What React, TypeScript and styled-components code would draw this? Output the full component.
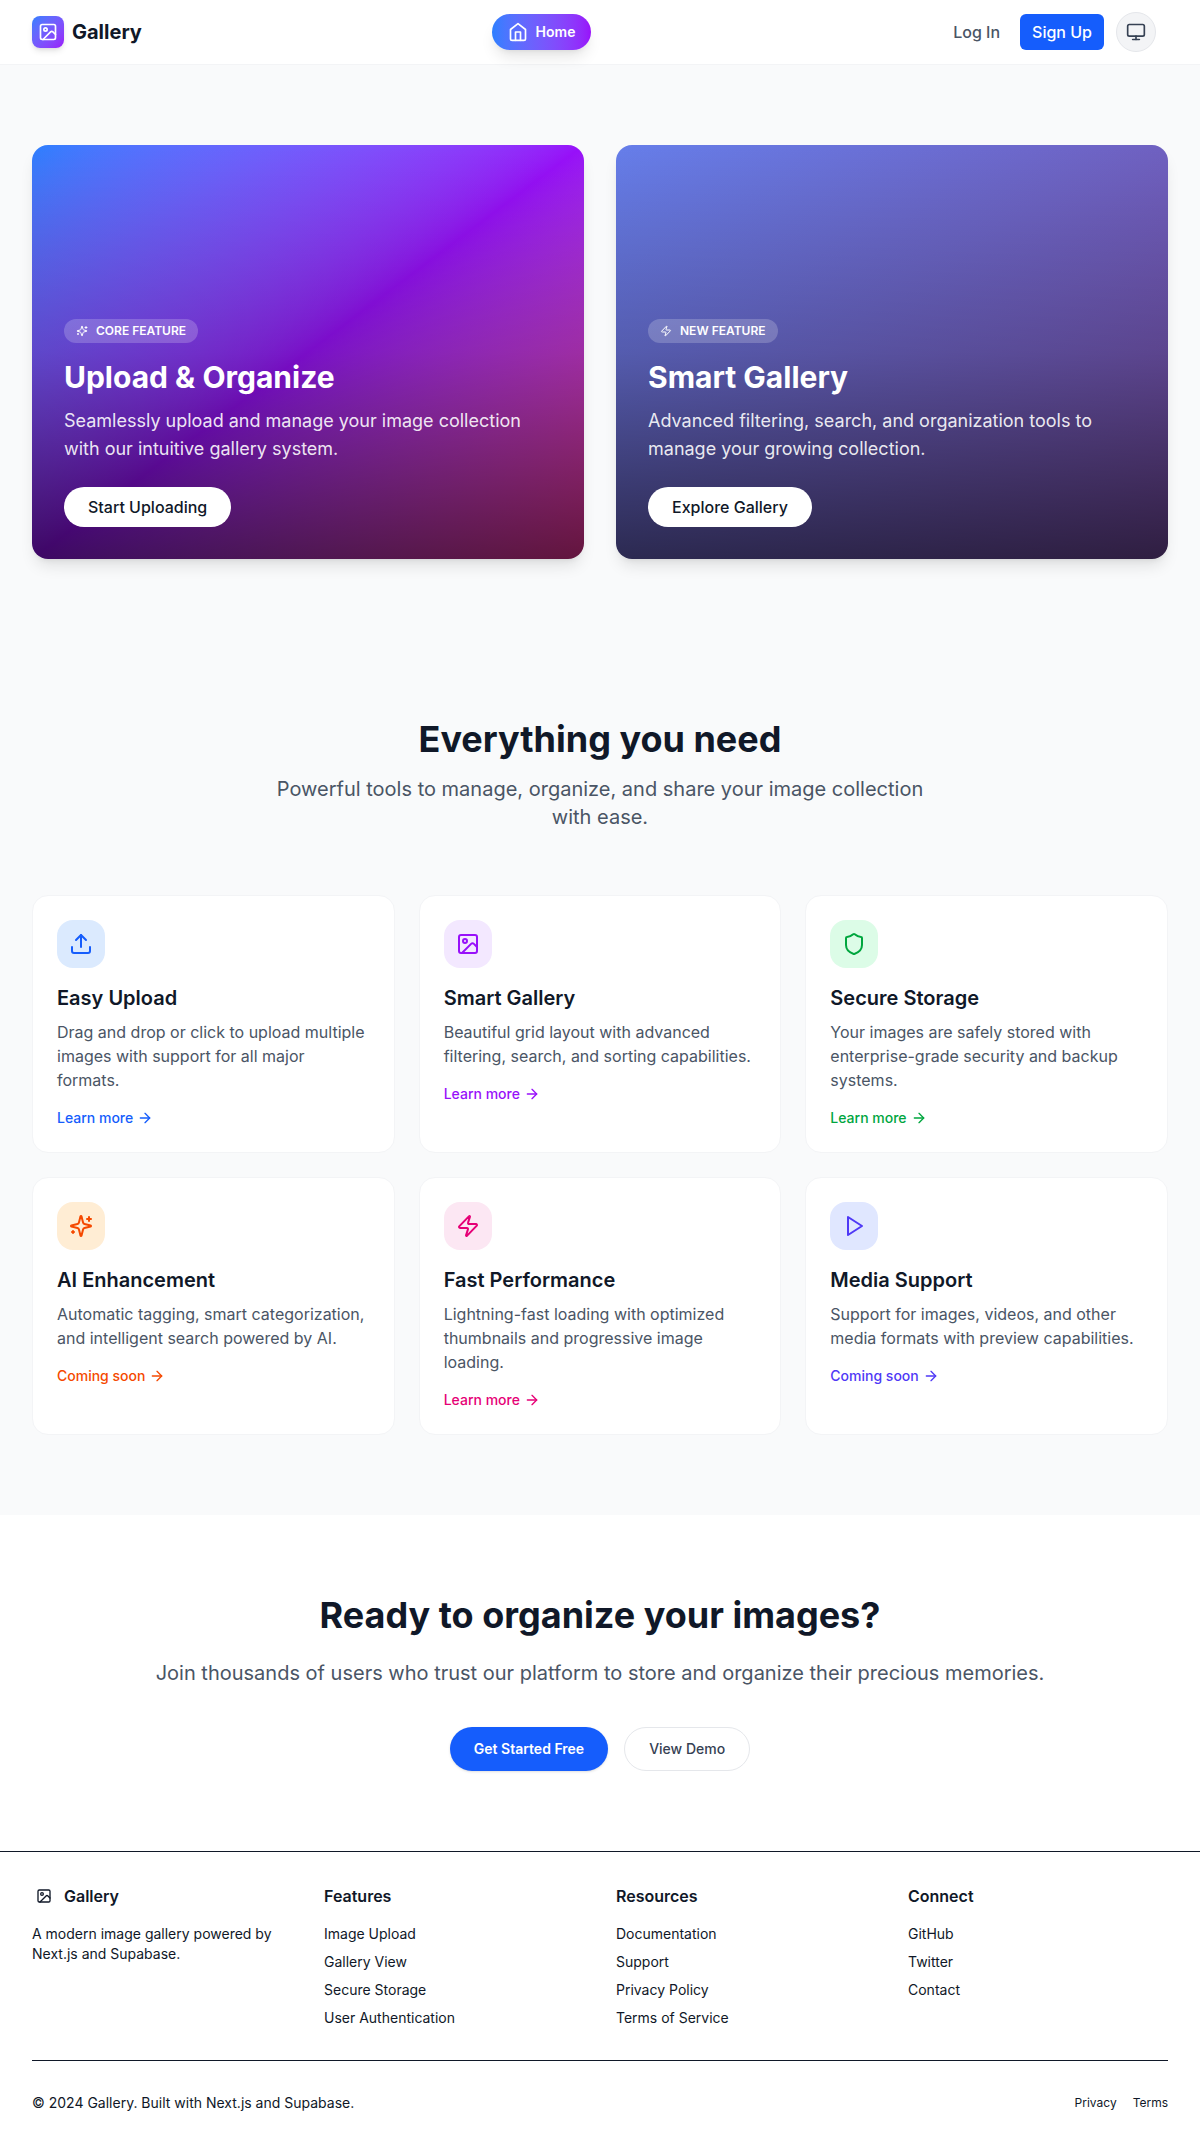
import React from "react";
import styled, { createGlobalStyle } from "styled-components";
import {
  ArrowRight,
  Image as ImageIcon,
  Monitor,
  Shield,
  Zap,
} from "lucide-react";

const GlobalStyle = createGlobalStyle`
  *, *::before, *::after { box-sizing: border-box; }
  body {
    margin: 0;
    background: #f9fafb;
    color: #101828;
    font-family: Inter, "Liberation Sans", sans-serif;
    font-size: 16px;
    line-height: 24px;
    -webkit-font-smoothing: antialiased;
  }
  h1, h2, h3, h4, p, ul { margin: 0; padding: 0; }
  ul { list-style: none; }
  a { color: inherit; text-decoration: none; }
  button { font: inherit; border: 0; margin: 0; cursor: pointer; }
  svg { display: block; flex-shrink: 0; }
`;

/* Icons */

type IconProps = { size: number };

const StrokeSvg = ({ size, children }: IconProps & { children: React.ReactNode }) => (
  <svg
    width={size}
    height={size}
    viewBox="0 0 24 24"
    fill="none"
    stroke="currentColor"
    strokeWidth={2}
    strokeLinecap="round"
    strokeLinejoin="round"
  >
    {children}
  </svg>
);

const HomeIcon = ({ size }: IconProps) => (
  <StrokeSvg size={size}>
    <path d="m3 9 9-7 9 7v11a2 2 0 0 1-2 2H5a2 2 0 0 1-2-2z" />
    <polyline points="9 22 9 12 15 12 15 22" />
  </StrokeSvg>
);

const UploadIcon = ({ size }: IconProps) => (
  <StrokeSvg size={size}>
    <path d="M21 15v4a2 2 0 0 1-2 2H5a2 2 0 0 1-2-2v-4" />
    <polyline points="17 8 12 3 7 8" />
    <line x1="12" x2="12" y1="3" y2="15" />
  </StrokeSvg>
);

const SparklesIcon = ({ size }: IconProps) => (
  <StrokeSvg size={size}>
    <path d="M9.937 15.5A2 2 0 0 0 8.5 14.063l-6.135-1.582a.5.5 0 0 1 0-.962L8.5 9.936A2 2 0 0 0 9.937 8.5l1.582-6.135a.5.5 0 0 1 .963 0L14.063 8.5A2 2 0 0 0 15.5 9.937l6.135 1.581a.5.5 0 0 1 0 .964L15.5 14.063a2 2 0 0 0-1.437 1.437l-1.582 6.135a.5.5 0 0 1-.963 0z" />
    <path d="M20 3v4" />
    <path d="M22 5h-4" />
    <path d="M4 17v2" />
    <path d="M5 18H3" />
  </StrokeSvg>
);

const PlayIcon = ({ size }: IconProps) => (
  <StrokeSvg size={size}>
    <polygon points="6 3 20 12 6 21 6 3" />
  </StrokeSvg>
);

/* Header */

const Header = styled.header`
  display: flex;
  align-items: center;
  justify-content: space-between;
  height: 65px;
  padding: 0 32px;
  background: #fff;
  border-bottom: 1px solid #f3f4f6;
`;

const Brand = styled.a`
  display: flex;
  align-items: center;
  gap: 8px;
  font-size: 20px;
  line-height: 28px;
  font-weight: 700;
`;

const BrandMark = styled.span`
  display: flex;
  align-items: center;
  justify-content: center;
  width: 32px;
  height: 32px;
  border-radius: 8px;
  color: #fff;
  background: linear-gradient(to bottom right in oklab, #2b7fff, #9810fa);
  box-shadow: 0 4px 6px -1px rgba(0, 0, 0, 0.1), 0 2px 4px -2px rgba(0, 0, 0, 0.1);
`;

const NavPill = styled.a`
  display: flex;
  align-items: center;
  gap: 8px;
  height: 36px;
  padding: 0 16px;
  border-radius: 18px;
  color: #fff;
  font-size: 14px;
  line-height: 20px;
  font-weight: 600;
  background: linear-gradient(to right in oklab, #2b7fff, #9810fa);
  box-shadow: 0 10px 15px -3px rgba(0, 0, 0, 0.1), 0 4px 6px -4px rgba(0, 0, 0, 0.1);
`;

const Actions = styled.div`
  display: flex;
  align-items: center;
  margin-right: 12px;
`;

const LogInLink = styled.a`
  padding: 6px 12px;
  margin-right: 8px;
  font-weight: 500;
  color: #4a5565;
`;

const SignUpButton = styled.button`
  height: 36px;
  padding: 0 12px;
  margin-right: 12px;
  border-radius: 6px;
  background: #155dfc;
  color: #fff;
  font-weight: 500;
`;

const ThemeButton = styled.button`
  display: flex;
  align-items: center;
  justify-content: center;
  width: 40px;
  height: 40px;
  padding: 0;
  border: 1px solid #e5e7eb;
  border-radius: 50%;
  background: #f3f4f6;
  color: #364153;
`;

/* Hero */

const Hero = styled.section`
  display: grid;
  grid-template-columns: 1fr 1fr;
  gap: 32px;
  padding: 80px 32px;
`;

const HeroCard = styled.article<{ $fill: string }>`
  display: flex;
  flex-direction: column;
  align-items: flex-start;
  justify-content: flex-end;
  aspect-ratio: 4 / 3;
  padding: 32px;
  border-radius: 16px;
  color: #fff;
  background: linear-gradient(
      to top in oklab,
      rgba(0, 0, 0, 0.6),
      rgba(0, 0, 0, 0.2),
      rgba(0, 0, 0, 0)
    ),
    ${(p) => p.$fill};
  box-shadow: 0 10px 15px -3px rgba(0, 0, 0, 0.1), 0 4px 6px -4px rgba(0, 0, 0, 0.1);
`;

const Badge = styled.span`
  display: flex;
  align-items: center;
  gap: 8px;
  height: 24px;
  padding: 0 12px;
  border-radius: 12px;
  background: rgba(255, 255, 255, 0.2);
  font-size: 12px;
  line-height: 16px;
  font-weight: 600;
  text-transform: uppercase;
`;

const HeroTitle = styled.h2`
  margin-top: 16px;
  font-size: 30px;
  line-height: 36px;
  font-weight: 700;
`;

const HeroText = styled.p`
  margin-top: 12px;
  font-size: 18px;
  line-height: 28px;
  color: rgba(255, 255, 255, 0.9);
`;

const HeroButton = styled.button`
  height: 40px;
  margin-top: 24px;
  padding: 0 24px;
  border-radius: 20px;
  background: #fff;
  color: #101828;
  font-weight: 500;
`;

/* Features */

const Features = styled.section`
  padding: 80px 32px;
`;

const SectionTitle = styled.h2`
  font-size: 36px;
  line-height: 40px;
  font-weight: 700;
  text-align: center;
`;

const SectionText = styled.p<{ $top: number; $max?: number }>`
  max-width: ${(p) => (p.$max ? `${p.$max}px` : "none")};
  margin: ${(p) => p.$top}px auto 0;
  font-size: 20px;
  line-height: 28px;
  text-align: center;
  color: #4a5565;
`;

const FeatureGrid = styled.div`
  display: grid;
  grid-template-columns: repeat(3, 1fr);
  gap: 24px;
  margin-top: 64px;
`;

const FeatureCard = styled.article`
  padding: 24px;
  border: 1px solid #f3f4f6;
  border-radius: 16px;
  background: #fff;
`;

const FeatureIcon = styled.span<{ $bg: string; $fg: string }>`
  display: flex;
  align-items: center;
  justify-content: center;
  width: 48px;
  height: 48px;
  border-radius: 16px;
  background: ${(p) => p.$bg};
  color: ${(p) => p.$fg};
`;

const FeatureTitle = styled.h3`
  margin-top: 16px;
  font-size: 20px;
  line-height: 28px;
  font-weight: 600;
`;

const FeatureText = styled.p`
  margin-top: 8px;
  color: #4a5565;
`;

const FeatureLink = styled.a<{ $fg: string }>`
  display: flex;
  align-items: center;
  gap: 4px;
  margin-top: 16px;
  font-size: 14px;
  line-height: 20px;
  font-weight: 500;
  color: ${(p) => p.$fg};
`;

/* Call to action */

const Cta = styled.section`
  padding: 80px 32px;
  background: #fff;
`;

const CtaButtons = styled.div`
  display: flex;
  justify-content: center;
  gap: 16px;
  margin-top: 40px;
`;

const CtaButton = styled.button<{ $primary?: boolean }>`
  height: 44px;
  padding: 0 24px;
  border: ${(p) => (p.$primary ? "0" : "1px solid #e5e7eb")};
  border-radius: 22px;
  background: ${(p) => (p.$primary ? "#155dfc" : "#fff")};
  color: ${(p) => (p.$primary ? "#fff" : "#364153")};
  font-size: 14px;
  line-height: 20px;
  font-weight: ${(p) => (p.$primary ? 600 : 500)};
  box-shadow: ${(p) =>
    p.$primary ? "0 1px 3px rgba(0,0,0,0.1), 0 1px 2px -1px rgba(0,0,0,0.1)" : "none"};
`;

/* Footer */

const Footer = styled.footer`
  padding: 32px;
  border-top: 1px solid #101828;
  background: #fff;
  font-size: 14px;
  line-height: 20px;
`;

const FooterGrid = styled.div`
  display: grid;
  grid-template-columns: repeat(4, 1fr);
  gap: 32px;
`;

const FooterHeading = styled.h4`
  display: flex;
  align-items: center;
  gap: 8px;
  margin-bottom: 16px;
  font-size: 16px;
  line-height: 24px;
  font-weight: 600;
`;

const FooterMark = styled.span`
  display: flex;
  align-items: center;
  justify-content: center;
  width: 24px;
  height: 24px;
`;

const FooterList = styled.ul`
  display: flex;
  flex-direction: column;
  gap: 8px;
`;

const FooterBottom = styled.div`
  display: flex;
  align-items: center;
  justify-content: space-between;
  margin-top: 32px;
  padding-top: 32px;
  border-top: 1px solid #101828;
`;

const LegalLinks = styled.nav`
  display: flex;
  gap: 16px;
  font-size: 12px;
  line-height: 16px;
`;

const heroes = [
  {
    fill: "linear-gradient(to bottom right in oklab, #2b7fff, #9810fa, #f6339a)",
    icon: <SparklesIcon size={12} />,
    badge: "Core Feature",
    title: "Upload & Organize",
    text: "Seamlessly upload and manage your image collection with our intuitive gallery system.",
    action: "Start Uploading",
  },
  {
    fill: "linear-gradient(135deg, #667eea 0%, #764ba2 100%)",
    icon: <Zap size={12} />,
    badge: "New Feature",
    title: "Smart Gallery",
    text: "Advanced filtering, search, and organization tools to manage your growing collection.",
    action: "Explore Gallery",
  },
];

const features = [
  {
    icon: <UploadIcon size={24} />,
    bg: "#dbeafe",
    fg: "#155dfc",
    title: "Easy Upload",
    text: "Drag and drop or click to upload multiple images with support for all major formats.",
    link: "Learn more",
  },
  {
    icon: <ImageIcon size={24} />,
    bg: "#f3e8ff",
    fg: "#9810fa",
    title: "Smart Gallery",
    text: "Beautiful grid layout with advanced filtering, search, and sorting capabilities.",
    link: "Learn more",
  },
  {
    icon: <Shield size={24} />,
    bg: "#dcfce7",
    fg: "#00a63e",
    title: "Secure Storage",
    text: "Your images are safely stored with enterprise-grade security and backup systems.",
    link: "Learn more",
  },
  {
    icon: <SparklesIcon size={24} />,
    bg: "#ffedd4",
    fg: "#f54900",
    title: "AI Enhancement",
    text: "Automatic tagging, smart categorization, and intelligent search powered by AI.",
    link: "Coming soon",
  },
  {
    icon: <Zap size={24} />,
    bg: "#fce7f3",
    fg: "#e60076",
    title: "Fast Performance",
    text: "Lightning-fast loading with optimized thumbnails and progressive image loading.",
    link: "Learn more",
  },
  {
    icon: <PlayIcon size={24} />,
    bg: "#e0e7ff",
    fg: "#4f39f6",
    title: "Media Support",
    text: "Support for images, videos, and other media formats with preview capabilities.",
    link: "Coming soon",
  },
];

const footerColumns = [
  {
    heading: "Features",
    links: ["Image Upload", "Gallery View", "Secure Storage", "User Authentication"],
  },
  {
    heading: "Resources",
    links: ["Documentation", "Support", "Privacy Policy", "Terms of Service"],
  },
  { heading: "Connect", links: ["GitHub", "Twitter", "Contact"] },
];

export default function App() {
  return (
    <>
      <GlobalStyle />
      <Header>
        <Brand href="#">
          <BrandMark>
            <ImageIcon size={20} />
          </BrandMark>
          Gallery
        </Brand>
        <NavPill href="#">
          <HomeIcon size={20} />
          Home
        </NavPill>
        <Actions>
          <LogInLink href="#">Log In</LogInLink>
          <SignUpButton>Sign Up</SignUpButton>
          <ThemeButton aria-label="Theme">
            <Monitor size={20} />
          </ThemeButton>
        </Actions>
      </Header>

      <main>
        <Hero>
          {heroes.map((h) => (
            <HeroCard key={h.title} $fill={h.fill}>
              <Badge>
                {h.icon}
                {h.badge}
              </Badge>
              <HeroTitle>{h.title}</HeroTitle>
              <HeroText>{h.text}</HeroText>
              <HeroButton>{h.action}</HeroButton>
            </HeroCard>
          ))}
        </Hero>

        <Features>
          <SectionTitle>Everything you need</SectionTitle>
          <SectionText $top={16} $max={672}>
            Powerful tools to manage, organize, and share your image collection with ease.
          </SectionText>
          <FeatureGrid>
            {features.map((f) => (
              <FeatureCard key={f.title}>
                <FeatureIcon $bg={f.bg} $fg={f.fg}>
                  {f.icon}
                </FeatureIcon>
                <FeatureTitle>{f.title}</FeatureTitle>
                <FeatureText>{f.text}</FeatureText>
                <FeatureLink href="#" $fg={f.fg}>
                  {f.link}
                  <ArrowRight size={16} />
                </FeatureLink>
              </FeatureCard>
            ))}
          </FeatureGrid>
        </Features>

        <Cta>
          <SectionTitle>Ready to organize your images?</SectionTitle>
          <SectionText $top={24}>
            Join thousands of users who trust our platform to store and organize their precious
            memories.
          </SectionText>
          <CtaButtons>
            <CtaButton $primary>Get Started Free</CtaButton>
            <CtaButton>View Demo</CtaButton>
          </CtaButtons>
        </Cta>
      </main>

      <Footer>
        <FooterGrid>
          <div>
            <FooterHeading>
              <FooterMark>
                <ImageIcon size={16} />
              </FooterMark>
              Gallery
            </FooterHeading>
            <p>A modern image gallery powered by Next.js and Supabase.</p>
          </div>
          {footerColumns.map((c) => (
            <div key={c.heading}>
              <FooterHeading>{c.heading}</FooterHeading>
              <FooterList>
                {c.links.map((l) => (
                  <li key={l}>
                    <a href="#">{l}</a>
                  </li>
                ))}
              </FooterList>
            </div>
          ))}
        </FooterGrid>
        <FooterBottom>
          <p>© 2024 Gallery. Built with Next.js and Supabase.</p>
          <LegalLinks>
            <a href="#">Privacy</a>
            <a href="#">Terms</a>
          </LegalLinks>
        </FooterBottom>
      </Footer>
    </>
  );
}
